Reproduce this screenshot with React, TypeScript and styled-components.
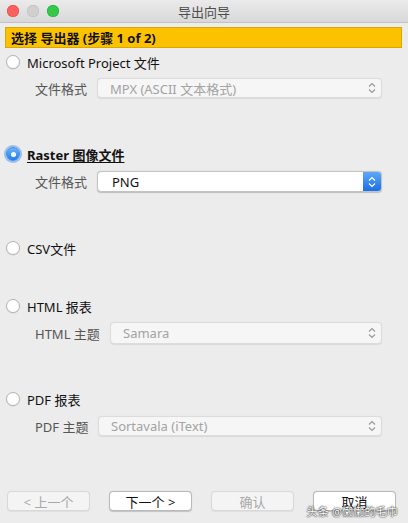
import styled, { createGlobalStyle } from "styled-components";

const GlobalStyle = createGlobalStyle`
  html, body {
    margin: 0;
    padding: 0;
    background: #ececec;
  }
  body {
    font-family: "Noto Sans", "Noto Sans CJK SC", sans-serif;
    font-size: 13px;
    color: #1a1a1a;
  }
`;

const Window = styled.div`
  width: 408px;
  height: 523px;
  background: #ececec;
  display: flex;
  flex-direction: column;
  position: relative;
  overflow: hidden;
`;

const TitleBar = styled.div`
  display: flex;
  align-items: center;
  position: relative;
  background: linear-gradient(#ebebeb, #d8d8d8);
  border-bottom: 1px solid #c2c2c2;
  box-sizing: border-box;
  height: 23px;
`;

const Lights = styled.div`
  display: flex;
  gap: 8px;
  padding-left: 7px;
`;

const Light = styled.span<{ color: string; edge: string }>`
  width: 12px;
  height: 12px;
  border-radius: 50%;
  background: ${p => p.color};
  box-shadow: inset 0 0 0 0.5px ${p => p.edge};
`;

const Title = styled.div`
  position: absolute;
  left: 0;
  right: 0;
  text-align: center;
  color: #4d4d4d;
  font-size: 13px;
`;

const Body = styled.div`
  flex: 1;
  display: flex;
  flex-direction: column;
  padding: 4px 6px 0 5px;
`;

const Header = styled.div`
  height: 21px;
  background: #fcc200;
  border: 1px solid #d9a900;
  box-sizing: border-box;
  display: flex;
  align-items: center;
  padding-left: 5px;
  font-weight: bold;
  font-size: 13px;
  color: #111;
`;

const Group = styled.div<{ h: number }>`
  height: ${p => p.h}px;
  display: flex;
  flex-direction: column;
`;

const RadioRow = styled.label`
  height: 16px;
  display: flex;
  align-items: center;
  gap: 7px;
  padding-left: 1px;
`;

const Radio = styled.span<{ checked?: boolean }>`
  width: 14px;
  height: 14px;
  flex: none;
  border-radius: 50%;
  box-sizing: border-box;
  display: flex;
  align-items: center;
  justify-content: center;
  background: ${p => (p.checked ? "linear-gradient(#6cb3fa, #1f7ef2)" : "#fff")};
  border: 1px solid ${p => (p.checked ? "#3d8ae8" : "#b4b4b4")};
  box-shadow: ${p => (p.checked ? "0 0 0 2px rgba(90, 150, 230, 0.55)" : "0 0.5px 1px rgba(0,0,0,0.1)")};
  &::after {
    content: "";
    width: 5px;
    height: 5px;
    border-radius: 50%;
    background: #fff;
    display: ${p => (p.checked ? "block" : "none")};
  }
`;

const RadioText = styled.span<{ active?: boolean }>`
  font-size: 13px;
  font-weight: ${p => (p.active ? "bold" : "normal")};
  text-decoration: ${p => (p.active ? "underline" : "none")};
  text-underline-offset: 2px;
  color: #111;
`;

const SettingRow = styled.div<{ top: number }>`
  display: flex;
  align-items: center;
  margin-top: ${p => p.top}px;
  padding-left: 30px;
  padding-right: 20px;
`;

const SettingLabel = styled.span<{ w: number }>`
  width: ${p => p.w}px;
  flex: none;
  color: #555;
  font-size: 13px;
`;

const Select = styled.div<{ enabled?: boolean; h: number }>`
  flex: 1;
  height: ${p => p.h}px;
  box-sizing: border-box;
  display: flex;
  align-items: center;
  padding-left: ${p => (p.enabled ? 14 : 12)}px;
  border-radius: 4px;
  background: ${p => (p.enabled ? "#fff" : "#f6f6f6")};
  border: 1px solid ${p => (p.enabled ? "#c3c3c3" : "#dcdcdc")};
  box-shadow: 0 0.5px 1px rgba(0, 0, 0, ${p => (p.enabled ? 0.2 : 0.08)});
  color: ${p => (p.enabled ? "#111" : "#a3a3a3")};
  font-size: 13px;
  overflow: hidden;
`;

const Stepper = styled.span<{ enabled?: boolean }>`
  margin-left: auto;
  width: 18px;
  align-self: stretch;
  display: flex;
  align-items: center;
  justify-content: center;
  background: ${p => (p.enabled ? "linear-gradient(#5ea8f8, #1b6fe8)" : "transparent")};
`;

const Footer = styled.div`
  display: flex;
  gap: 19px;
  padding-left: 2px;
  margin-top: 7px;
`;

const Button = styled.div<{ disabled?: boolean }>`
  width: 83px;
  height: 20px;
  box-sizing: border-box;
  border-radius: 4px;
  display: flex;
  align-items: center;
  justify-content: center;
  background: ${p => (p.disabled ? "#f4f4f4" : "#fff")};
  border: 1px solid ${p => (p.disabled ? "#d8d8d8" : "#b9b9b9")};
  box-shadow: 0 0.5px 1px rgba(0, 0, 0, ${p => (p.disabled ? 0.06 : 0.18)});
  color: ${p => (p.disabled ? "#a8a8a8" : "#111")};
  font-size: 13px;
`;

const Watermark = styled.div`
  position: absolute;
  right: 10px;
  bottom: 4px;
  color: #fff;
  font-size: 11px;
  text-shadow: 0 0 2px #333, 0 0 1px #000;
  letter-spacing: 0.2px;
`;

const Chevrons = ({ color }: { color: string }) => (
  <svg width="8" height="12" viewBox="0 0 8 12">
    <path d="M1 4.5 L4 1.5 L7 4.5 M1 7.5 L4 10.5 L7 7.5" fill="none" stroke={color} strokeWidth="1.2" />
  </svg>
);

type Opt = {
  label: string;
  checked?: boolean;
  setting?: { name: string; w: number; value: string; h: number; top: number };
  h: number;
};

const options: Opt[] = [
  { label: "Microsoft Project 文件", h: 92, setting: { name: "文件格式", w: 62, value: "MPX (ASCII 文本格式)", h: 20, top: 8 } },
  { label: "Raster 图像文件", checked: true, h: 94, setting: { name: "文件格式", w: 62, value: "PNG", h: 21, top: 9 } },
  { label: "CSV文件", h: 58 },
  { label: "HTML 报表", h: 93, setting: { name: "HTML 主题", w: 75, value: "Samara", h: 22, top: 8 } },
  { label: "PDF 报表", h: 93, setting: { name: "PDF 主题", w: 63, value: "Sortavala (iText)", h: 20, top: 9 } },
];

export default function App() {
  return (
    <Window>
      <GlobalStyle />
      <TitleBar>
        <Lights>
          <Light color="#fc605c" edge="#de4643" />
          <Light color="#d0d0d0" edge="#b8b8b8" />
          <Light color="#34c84a" edge="#25a536" />
        </Lights>
        <Title>导出向导</Title>
      </TitleBar>
      <Body>
        <Header>选择 导出器 (步骤 1 of 2)</Header>
        <Group h={6} />
        {options.map(o => (
          <Group key={o.label} h={o.h}>
            <RadioRow>
              <Radio checked={o.checked} />
              <RadioText active={o.checked}>{o.label}</RadioText>
            </RadioRow>
            {o.setting && (
              <SettingRow top={o.setting.top}>
                <SettingLabel w={o.setting.w}>{o.setting.name}</SettingLabel>
                <Select enabled={o.checked} h={o.setting.h}>
                  {o.setting.value}
                  <Stepper enabled={o.checked}>
                    <Chevrons color={o.checked ? "#fff" : "#9a9a9a"} />
                  </Stepper>
                </Select>
              </SettingRow>
            )}
          </Group>
        ))}
        <Footer>
          <Button disabled>&lt; 上一个</Button>
          <Button>下一个 &gt;</Button>
          <Button disabled>确认</Button>
          <Button>取消</Button>
        </Footer>
      </Body>
      <Watermark>头条 @懒懒的毛巾</Watermark>
    </Window>
  );
}
